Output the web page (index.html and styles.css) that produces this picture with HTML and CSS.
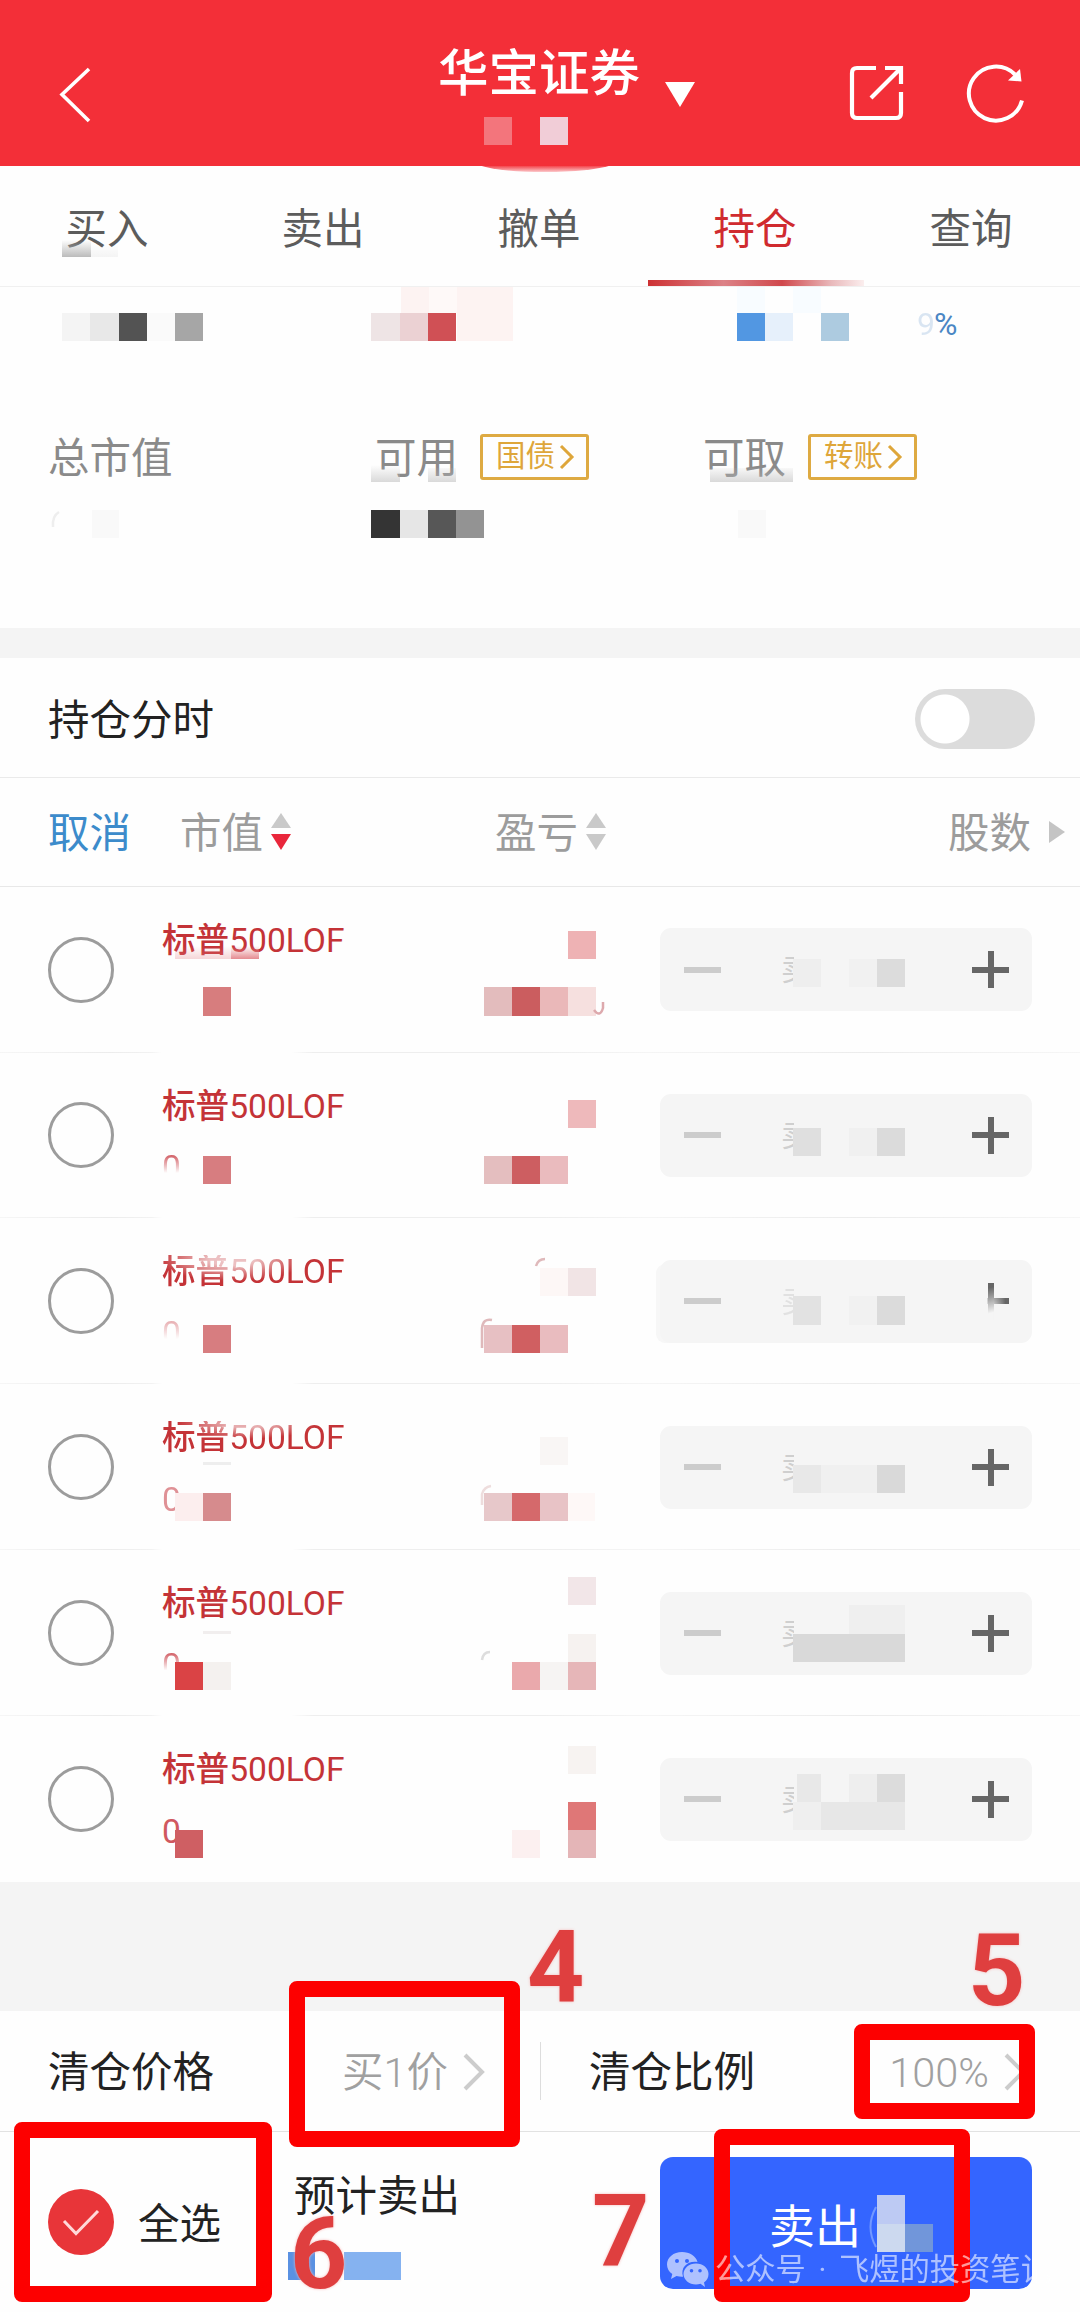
FILE: index.html
```html
<!DOCTYPE html>
<html lang="zh-CN">
<head>
<meta charset="utf-8">
<title>华宝证券</title>
<link rel="stylesheet" href="styles.css">
</head>
<body>
<div class="page">
  <header class="topbar">
    <svg class="back" width="34" height="58" viewBox="0 0 34 58"><path d="M31 3 4 28.500 31 55" fill="none" stroke="#fff" stroke-width="3.600"/></svg>
    <div class="title">华宝证券<i class="caret"></i></div>
    <div class="actions">
      <svg width="56" height="58" viewBox="0 0 56 58" fill="none" stroke="#fff" stroke-width="4.200"><path d="M27 4H8Q3 4 3 9V49Q3 54 8 54H47Q52 54 52 49V28M36 4H52V20M52 4 22 34"/></svg>
      <svg width="60" height="62" viewBox="0 0 60 62" fill="none" stroke="#fff" stroke-width="4"><path d="M57 36.500A27 27 0 1 1 50 10.500"/><path d="M43 16.500 56.500 17.500 55 5Z" fill="#fff" stroke="none"/></svg>
    </div>
  </header>
  <nav class="tabs"><span>买入</span><span>卖出</span><span>撤单</span><span class="active">持仓</span><span>查询</span></nav>
  <section class="summary">
    <div class="rate"><span>9</span>%</div>
    <div class="labels">
      <div><span>总市值</span></div>
      <div><span>可用</span><span class="tag">国债<svg width="16" height="26" viewBox="0 0 16 26"><path d="M2 2 13 13 2 24"/></svg></span></div>
      <div><span>可取</span><span class="tag">转账<svg width="16" height="26" viewBox="0 0 16 26"><path d="M2 2 13 13 2 24"/></svg></span></div>
    </div>
  </section>
  <section class="switch-row"><span>持仓分时</span><i class="toggle"></i></section>
  <section class="columns">
    <span class="cancel">取消</span>
    <span class="sort">市值<svg width="22" height="38" viewBox="0 0 22 38"><path d="M11 0 21 15H1Z" fill="#c9c9c9"/><path d="M11 37 21 21H1Z" fill="#e9263b"/></svg></span>
    <span class="sort">盈亏<svg width="22" height="38" viewBox="0 0 22 38"><path d="M11 0 21 15H1Z" fill="#c9c9c9"/><path d="M11 37 21 21H1Z" fill="#c9c9c9"/></svg></span>
    <span class="shares">股数<svg width="16" height="22" viewBox="0 0 16 22"><path d="M0 0 16 11 0 22Z" fill="#c4c4c4"/></svg></span>
  </section>
  <ul class="holdings">
    <li><i class="radio"></i><div class="name"><b>标普500LOF</b></div><div class="stepper"><i class="minus"></i><em>卖</em><i class="plus"></i></div></li>
    <li><i class="radio"></i><div class="name"><b>标普500LOF</b><s class="half">0</s></div><div class="stepper"><i class="minus"></i><em>卖</em><i class="plus"></i></div></li>
    <li><i class="radio"></i><div class="name"><b class="worn">标普500LOF</b><s class="half pale">0</s></div><div class="stepper smeared"><i class="minus"></i><em class="pale">卖</em><i class="plus partial"></i></div></li>
    <li><i class="radio"></i><div class="name"><b class="worn-top">标普500LOF</b><s class="soft">0</s></div><div class="stepper"><i class="minus"></i><em>卖</em><i class="plus"></i></div></li>
    <li><i class="radio"></i><div class="name"><b>标普500LOF</b><s class="half">0</s></div><div class="stepper"><i class="minus"></i><em>卖</em><i class="plus"></i></div></li>
    <li><i class="radio"></i><div class="name"><b>标普500LOF</b><s>0</s></div><div class="stepper"><i class="minus"></i><em>卖</em><i class="plus"></i></div></li>
  </ul>
  <section class="options">
    <div class="option price"><span>清仓价格</span><span class="pick">买1价<svg width="22" height="38" viewBox="0 0 22 38"><path d="M2 2 19 19 2 36"/></svg></span></div>
    <div class="option ratio"><span>清仓比例</span><span class="pick">100%<svg width="22" height="38" viewBox="0 0 22 38"><path d="M2 2 19 19 2 36"/></svg></span></div>
  </section>
  <footer class="footer">
    <svg class="checked" width="66" height="66" viewBox="0 0 66 66"><circle cx="33" cy="33" r="33" fill="#e83539"/><path d="M16 32 28 44.500 50 22" fill="none" stroke="#ffd9d9" stroke-width="3"/></svg>
    <span class="all">全选</span>
    <span class="estimate">预计卖出</span>
    <button class="sell">卖出</button>
  </footer>

  <!-- privacy mosaic laid over the account data -->
  <svg class="mosaic" width="1080" height="2312" viewBox="0 0 1080 2312">
    <defs>
      <linearGradient id="arc" x1="0" y1="0" x2="0" y2="1"><stop offset="0" stop-color="#f32f38"/><stop offset="1" stop-color="#f32f38" stop-opacity=".25"/></linearGradient>
      <linearGradient id="gray" x1="0" y1="0" x2="0" y2="1"><stop offset="0" stop-color="#bbb" stop-opacity="0"/><stop offset="1" stop-color="#bbb"/></linearGradient>
      <linearGradient id="pink" x1="0" y1="0" x2="0" y2="1"><stop offset="0" stop-color="#e58b90" stop-opacity="0"/><stop offset="1" stop-color="#e58b90"/></linearGradient>
    </defs>
    <path d="M478 165H612Q590 172 545 172Q500 172 478 165Z" fill="url(#arc)"/>
    <path d="M484 117h28v28h-28z" fill="#f3757c"/><path d="M540 117h28v28h-28z" fill="#f1cdd7"/>
    <path d="M62 240h29v17h-29z" fill="url(#gray)"/><path d="M91 244h27v13h-27z" fill="url(#gray)" opacity=".15"/>
    <path d="M401 287h28v26h-28zM457 287h56v54h-56z" fill="#fdf3f2"/><path d="M429 287h28v26h-28z" fill="#fef9f8"/>
    <g><path d="M62 313h28v28h-28z" fill="#f4f4f4"/><path d="M90 313h29v28h-29z" fill="#e8e8e8"/><path d="M119 313h28v28h-28z" fill="#535353"/><path d="M147 313h28v28h-28z" fill="#fafafa"/><path d="M175 313h28v28h-28z" fill="#a6a6a6"/></g>
    <g><path d="M371 313h29v28h-29z" fill="#eee4e5"/><path d="M400 313h28v28h-28z" fill="#ebd1d3"/><path d="M428 313h28v28h-28z" fill="#d05055"/></g>
    <g><path d="M737 287h28v26h-28zM793 287h28v26h-28z" fill="#f8fcff"/><path d="M737 313h28v28h-28z" fill="#5297e2"/><path d="M765 313h28v28h-28z" fill="#e6f0fb"/><path d="M821 313h28v28h-28z" fill="#adcbe0"/></g>
    <path d="M371 465h29v17h-29zM428 468h28v14h-28zM710 468h83v14h-83z" fill="url(#gray)" opacity=".55"/>
    <path d="M53 527Q52 516 59 512" fill="none" stroke="#eee" stroke-width="2.500"/>
    <g><path d="M371 510h29v28h-29z" fill="#343434"/><path d="M400 510h28v28h-28z" fill="#e6e6e6"/><path d="M428 510h28v28h-28z" fill="#575757"/><path d="M456 510h28v28h-28z" fill="#939393"/><path d="M92 510h27v28h-27zM738 510h28v28h-28z" fill="#f9f9f9"/></g>
    <!-- row 1 -->
    <path d="M175 946h56v13h-56z" fill="url(#pink)" opacity=".35"/><path d="M231 946h28v13h-28z" fill="url(#pink)"/>
    <g><path d="M203 987h28v29h-28z" fill="#d77d7e"/><path d="M568 931h28v28h-28z" fill="#eeb2b4"/><path d="M484 987h28v29h-28z" fill="#e3bcbd"/><path d="M512 987h28v29h-28z" fill="#cb5d5f"/><path d="M540 987h28v29h-28z" fill="#eab8b9"/><path d="M568 987h28v29h-28z" fill="#f6e0df"/><path d="M594 1010Q600 1018 603 1008V1002" fill="none" stroke="#dda9ad" stroke-width="2.500"/></g>
    <g><path d="M793 959h28v28h-28z" fill="#eee"/><path d="M849 959h28v28h-28z" fill="#f1f1f1"/><path d="M877 959h28v28h-28z" fill="#dcdcdc"/></g>
    <!-- row 2 -->
    <g><path d="M203 1156h28v28h-28z" fill="#d77d80"/><path d="M568 1100h28v28h-28z" fill="#eeb9bb"/><path d="M484 1156h28v28h-28z" fill="#e4bebf"/><path d="M512 1156h28v28h-28z" fill="#cd5e61"/><path d="M540 1156h28v28h-28z" fill="#eabbbe"/></g>
    <g><path d="M793 1128h28v28h-28z" fill="#dfdfdf"/><path d="M849 1128h28v28h-28z" fill="#f0f0f0"/><path d="M877 1128h28v28h-28z" fill="#dbdbdb"/></g>
    <!-- row 3 -->
    <g><path d="M203 1325h28v28h-28z" fill="#d77d80"/><path d="M540 1268h28v28h-28z" fill="#fdf7f6"/><path d="M568 1268h28v28h-28z" fill="#f1e4e5"/><path d="M536 1266Q538 1259 545 1259M482 1348V1328Q483 1318 492 1320" fill="none" stroke="#dfb9bb" stroke-width="2.500"/><path d="M484 1325h28v28h-28z" fill="#e7c0c3"/><path d="M512 1325h28v28h-28z" fill="#d05f61"/><path d="M540 1325h28v28h-28z" fill="#e9bcbf"/></g>
    <g><path d="M793 1296h28v29h-28z" fill="#e2e2e2"/><path d="M849 1296h28v29h-28z" fill="#f1f1f1"/><path d="M877 1296h28v29h-28z" fill="#dbdbdb"/></g>
    <!-- row 4 -->
    <g><path d="M203 1462h28v3h-28z" fill="#eee"/><path d="M175 1493h28v28h-28z" fill="#fceeee"/><path d="M203 1493h28v28h-28z" fill="#d68b8d"/><path d="M540 1437h28v28h-28z" fill="#f9f6f5"/><path d="M482 1505V1494Q484 1487 491 1486" fill="none" stroke="#eedddd" stroke-width="2.500"/><path d="M484 1493h28v28h-28z" fill="#e7c8ca"/><path d="M512 1493h28v28h-28z" fill="#d5696b"/><path d="M540 1493h28v28h-28z" fill="#e8c3c6"/><path d="M568 1493h27v28h-27z" fill="#fef8f7"/></g>
    <g><path d="M793 1465h28v28h-28z" fill="#e8e8e8"/><path d="M821 1465h56v28h-56z" fill="#f0f0f0"/><path d="M877 1465h28v28h-28z" fill="#d9d9d9"/></g>
    <!-- row 5 -->
    <g><path d="M203 1631h28v3h-28z" fill="#f1eeee"/><path d="M175 1662h28v28h-28z" fill="#da4345"/><path d="M203 1662h28v28h-28z" fill="#f4f1ef"/><path d="M568 1577h28v28h-28z" fill="#f2e6e8"/><path d="M568 1634h28v28h-28z" fill="#f6f2f0"/><path d="M482 1660Q483 1652 490 1652" fill="none" stroke="#ddd" stroke-width="2.500"/><path d="M512 1662h28v28h-28z" fill="#eaa9ac"/><path d="M540 1662h28v28h-28z" fill="#f6f4f3"/><path d="M568 1662h28v28h-28z" fill="#e6b6b8"/></g>
    <g><path d="M849 1605h56v29h-56z" fill="#efefef"/><path d="M793 1634h112v28h-112z" fill="#d9d9d9"/></g>
    <!-- row 6 -->
    <g><path d="M175 1830h28v28h-28z" fill="#cf5f63"/><path d="M568 1746h28v28h-28z" fill="#f7f3f1"/><path d="M568 1802h28v28h-28z" fill="#df7777"/><path d="M568 1830h28v28h-28z" fill="#e4b5b7"/><path d="M512 1830h28v28h-28z" fill="#fcf0f0"/></g>
    <g><path d="M797 1774h24v28h-24z" fill="#e8e8e8"/><path d="M849 1774h28v28h-28z" fill="#eee"/><path d="M877 1774h28v28h-28z" fill="#dcdcdc"/><path d="M793 1802h28v28h-28z" fill="#efefef"/><path d="M821 1802h84v28h-84z" fill="#e7e7e7"/></g>
    <!-- sell totals -->
    <g><path d="M288 2252h27v28h-27z" fill="#5a91e2"/><path d="M344 2252h57v28h-57z" fill="#85b2f0"/></g>
    <g><path d="M876 2207Q865 2227 876 2247" fill="none" stroke="#7298ff" stroke-width="2"/><path d="M877 2195h28v29h-28z" fill="#bdcaf3"/><path d="M877 2224h28v28h-28z" fill="#ccd9ef"/><path d="M905 2224h28v28h-28z" fill="#7196da"/></g>
  </svg>

  <!-- step callouts -->
  <div class="box box-price"></div><div class="box box-ratio"></div><div class="box box-all"></div><div class="box box-sell"></div>
  <span class="num num-4">4</span><span class="num num-5">5</span><span class="num num-6">6</span><span class="num num-7">7</span>
  <div class="watermark">
    <svg width="42" height="36" viewBox="0 0 42 36"><path fill="#fff" fill-rule="evenodd" d="M15 0C6.500 0 0 5.500 0 12.500c0 4 2 7.300 5.300 9.500L4 27l5.500-3c1.800.5 3.600.8 5.500.8h1C13 15 21 8.500 30.500 10 29 4 22.500 0 15 0ZM10 7a2 2 0 1 1 0 4 2 2 0 0 1 0-4ZM20 7a2 2 0 1 1 0 4 2 2 0 0 1 0-4Z"/><path fill="#fff" fill-rule="evenodd" d="M29 11.500c-7 0-12.500 4.700-12.500 10.500S22 32.500 29 32.500c1.600 0 3-.2 4.500-.7L38 35l-1-4.500c3-2 4.500-5 4.500-8.500 0-5.800-5.500-10.500-12.500-10.500ZM24.500 17a1.800 1.800 0 1 1 0 3.600 1.800 1.800 0 0 1 0-3.600ZM33 17a1.800 1.800 0 1 1 0 3.600 1.800 1.800 0 0 1 0-3.600Z"/></svg>
    <span>公众号</span><span class="dot">·</span><span>飞煜的投资笔记</span>
  </div>
</div>
</body>
</html>
```
FILE: styles.css
```css
* { box-sizing: border-box; }
body { margin: 0; background: #fefefe; font-family: Roboto, "Noto Sans CJK SC", sans-serif; font-size: 41.5px; line-height: 1; color: #222; font-weight: 400; }
.page { position: relative; width: 1080px; height: 2312px; overflow: hidden; display: flex; flex-direction: column; }
svg { display: block; flex: none; }

.topbar { height: 166px; background: #f32f38; color: #fff; display: grid; grid-template-columns: 200px 1fr 200px; padding: 0 55px 0 58px; }
.back { margin-top: 66px; }
.title { display: flex; justify-content: center; margin: 49px 0 0 50px; font-size: 50.5px; font-weight: 500; }
.caret { width: 30px; height: 25px; margin: 33px 0 0 25px; background: #fff; clip-path: polygon(0 0, 100% 0, 50% 100%); }
.actions { display: flex; justify-content: flex-end; gap: 60px; padding-top: 64px; }

.tabs { height: 121px; display: grid; grid-template-columns: repeat(5, 1fr); text-align: center; color: #5c5c5c; border-bottom: 1px solid #f0f0f0; }
.tabs span { padding: 43px 2px 0 0; }
.tabs .active { color: #d02b2f; background: linear-gradient(90deg, #cd3133, #dc8287 35%, #d0484c 62%, #e9b9bb 85%, #fbeeee) 0 114px / 100% 6px no-repeat; }

.summary { height: 341px; padding: 0 48px; }
.rate { height: 147px; padding: 21px 0 0 869px; font-size: 32px; color: #4a86c4; letter-spacing: -1px; }
.rate span { opacity: .2; }
.labels { display: grid; grid-template-columns: 327px 328px 1fr; align-items: center; height: 46px; color: #8a8a8a; }
.labels > div { display: flex; align-items: center; }
.labels > div > span:first-child { padding-top: 4px; }
.tag { display: flex; align-items: center; gap: 4px; width: 109px; height: 46px; margin-left: 22px; padding-left: 13px; border: 3px solid #deaa42; border-radius: 3px; font-size: 29.5px; color: #dea63a; }
.tag path { fill: none; stroke: #dea63a; stroke-width: 3; }

.switch-row { height: 150px; border-top: 30px solid #f4f4f4; border-bottom: 1px solid #eaeaea; display: flex; justify-content: space-between; align-items: center; padding: 3px 45px 0 48px; }
.switch-row span { padding-top: 4px; }
.toggle { width: 120px; height: 60px; border-radius: 30px; background: radial-gradient(circle at 30px 30px, #fff 24px, #dcdcdc 25px); }

.columns { height: 109px; display: grid; grid-template-columns: 132px 315px 453px 1fr; align-items: center; padding: 5px 0 0 48px; color: #9c9c9c; border-bottom: 1px solid #e8e8e8; }
.cancel { color: #3c8bcb; }
.sort, .shares { display: flex; align-items: center; }
.sort svg { margin: -4px 0 0 7px; }
.shares svg { margin: -4px 0 0 18px; }

.holdings { list-style: none; margin: 0; padding: 0; height: 996px; display: grid; grid-template-rows: repeat(6, 1fr); }
.holdings li { display: grid; grid-template-columns: 66px 546px 372px; align-items: center; padding-left: 48px; background: linear-gradient(90deg, #f6f6f6, #ececec 10%, #f2f2f2 14%, #fefefe 15% 27%, #eee 29% 50%, #f5f5f5 60%, #ececec 80%, #f6f6f6) bottom / 100% 1px no-repeat; }
.holdings li:last-child { background: none; }
.radio { width: 66px; height: 66px; border: 3px solid #9c9c9c; border-radius: 50%; }
.name { height: 100%; padding: 37px 0 0 48px; color: #c43337; font-size: 33.6px; display: flex; flex-direction: column; gap: 28px; }
.name b { font-weight: 450; width: 190px; }
.name s { text-decoration: none; width: 20px; color: #d0585f; }
.half { mask-image: linear-gradient(#000 10%, transparent 65%); }
.soft { opacity: .65; }
.pale { opacity: .5; }
.worn { mask-image: radial-gradient(ellipse 75px 22px at 70px 4px, rgba(0,0,0,.3) 30%, #000); }
.worn-top { mask-image: radial-gradient(ellipse 70px 16px at 85px 2px, rgba(0,0,0,.4) 30%, #000); }
.stepper { height: 83px; border-radius: 11px; background: #f5f5f5; display: flex; align-items: center; padding: 0 23px 0 24px; }
.smeared { box-shadow: -6px 2px 0 -2px #f7f7f7; }
.minus { width: 37px; height: 6px; background: #ccc; }
.stepper em { font-style: normal; font-size: 31px; width: 13px; overflow: hidden; margin-left: 60px; color: #cfcfcf; }
.plus { width: 37px; height: 37px; margin-left: auto; background: linear-gradient(#666, #666) center / 6px 100% no-repeat, linear-gradient(#666, #666) center / 100% 6px no-repeat; }
.partial { mask-image: linear-gradient(165deg, #000 20%, transparent 75%), linear-gradient(90deg, transparent 58%, #000 90%); clip-path: polygon(42% 0, 100% 0, 100% 100%, 42% 100%); }

.options { height: 250px; border-top: 129px solid #f4f4f4; border-bottom: 1px solid #e2e2e2; display: grid; grid-template-columns: 541px 1fr; align-items: center; }
.option { display: flex; align-items: center; justify-content: space-between; padding-top: 4px; }
.price { padding: 4px 55px 0 48px; height: 58px; border-right: 1px solid #ddd; }
.ratio { padding: 4px 54px 0 48px; }
.pick { display: flex; align-items: center; gap: 15px; color: #a0a0a0; font-weight: 350; }
.pick svg { margin-top: -2px; }
.pick path { fill: none; stroke: #ccc; stroke-width: 4; }

.footer { height: 180px; display: grid; grid-template-columns: 90px 156px 366px 372px; padding-left: 48px; }
.checked { margin-top: 57px; }
.all { padding-top: 72px; }
.estimate { padding-top: 44px; }
.sell { margin: 25px 0 0; height: 132px; padding: 0 60px 0 109px; border: 0; border-radius: 13px; background: #3465ff; color: #fff; font: 400 46px Roboto, "Noto Sans CJK SC", sans-serif; text-align: left; }

.mosaic { position: absolute; inset: 0; }
.box { position: absolute; border: 16px solid #fd0000; border-radius: 8px; }
.box-price { left: 289px; top: 1981px; width: 231px; height: 166px; }
.box-ratio { left: 854px; top: 2024px; width: 181px; height: 95px; }
.box-all { left: 14px; top: 2122px; width: 258px; height: 180px; }
.box-sell { left: 714px; top: 2129px; width: 256px; height: 173px; }
.num { position: absolute; font: 700 100px/1 Roboto, sans-serif; color: #df3f3f; text-shadow: 0 0 3px #f6b9b9; }
.num-4 { left: 527px; top: 1918px; }
.num-5 { left: 968px; top: 1921px; }
.num-6 { left: 290px; top: 2204px; }
.num-7 { left: 592px; top: 2181px; }
.watermark { position: absolute; left: 667px; top: 2252px; display: flex; align-items: center; white-space: nowrap; color: #fff; font-size: 30.3px; opacity: .6; }
.watermark svg { margin-right: 6px; }
.dot { width: 33px; text-align: center; }
```
